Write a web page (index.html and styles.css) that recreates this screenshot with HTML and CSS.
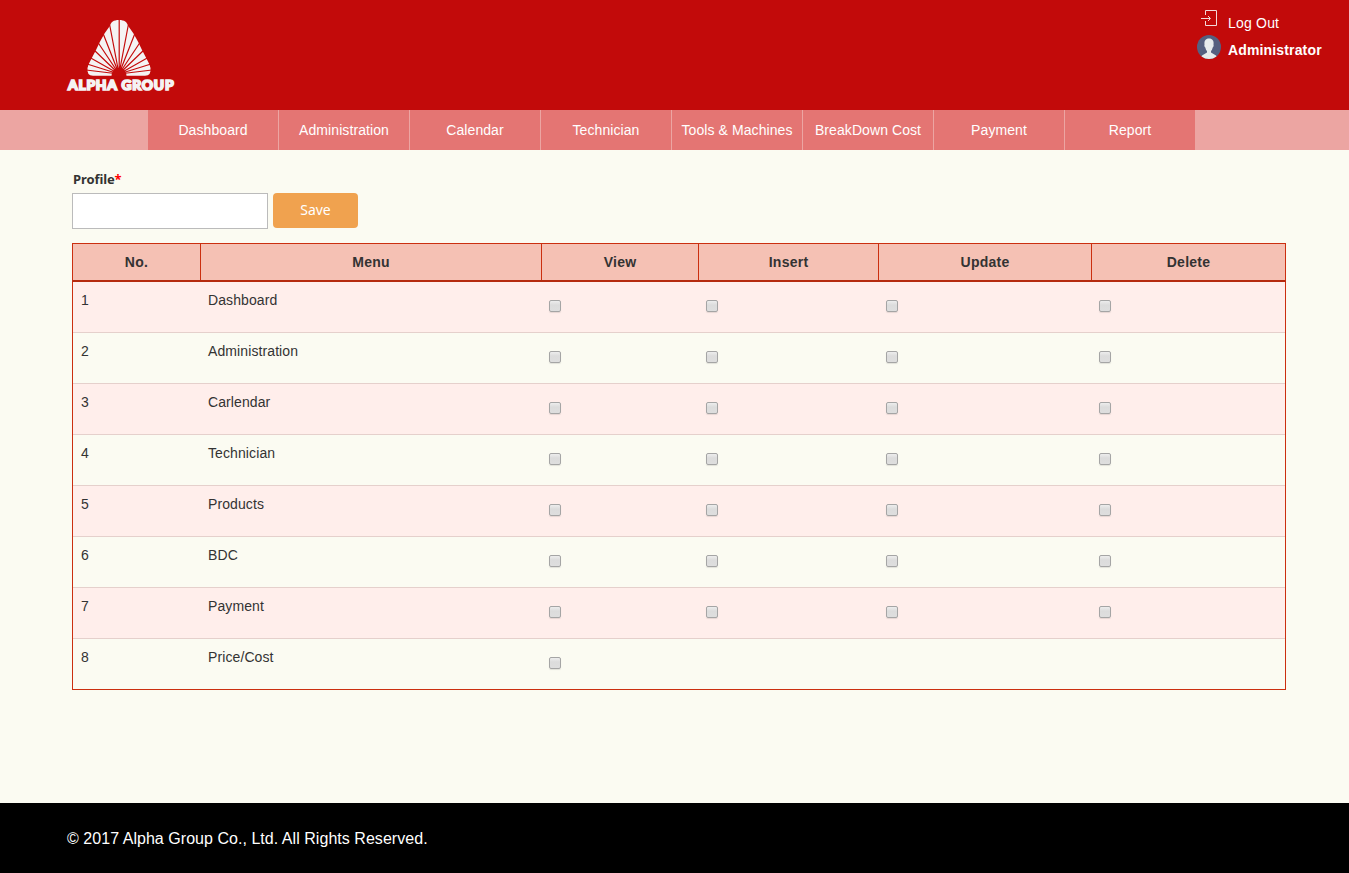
FILE: index.html
```
<!DOCTYPE html>
<html lang="en">
<head>
<meta charset="utf-8">
<title>Alpha Group</title>
<link rel="stylesheet" href="styles.css">
</head>
<body>
<header class="header">
  <svg class="logo" viewBox="0 0 120 90" width="120" height="90" role="img" aria-label="Alpha Group">
    <path fill="#f5f3f3" d="M59 10C53.500 10 51 12 49.800 16L44.500 23.500L39.800 32L36 40L31.800 48L28.500 54.500L27.500 58Q26.500 65.500 33 65.800H85Q91.500 65.500 90.500 58L89.500 54.500L86.200 48L82 40L78.200 32L73.500 23.500L68.200 16C67 12 64.500 10 59 10Z"/>
    <path stroke="#c40b0b" stroke-width="1.200" fill="none" d="M59.200 64V9M59 64L49.500 14M59 64L68.500 14M59 64L42.500 22M59 64L75.500 22M59 64L37 31M59 64L81 31M59 64L33 39M59 64L85 39M59 64L29 47M59 64L89 47M59 64L27 54M59 64L91 54M59 64L26 60M59 64L92 60"/>
    <path fill="#c40b0b" d="M51.500 66C52 55 66 55 66.500 66Z"/>
    <text class="wordmark" x="7.900" y="80.200" textLength="106.500" lengthAdjust="spacingAndGlyphs">ALPHA GROUP</text>
  </svg>
  <div class="account">
    <a class="account-row">
      <svg width="24" height="24" viewBox="0 0 24 24"><path d="M8.500 8V3.500H19.500V18.500H8.500V14M4 11.500H13M11 9L13.500 11.500L11 14" fill="none" stroke="#f3dada"/></svg>
      <span class="logout">Log Out</span>
    </a>
    <div class="account-row">
      <svg width="24" height="24" viewBox="0 0 24 24"><circle cx="12" cy="12" r="12" fill="#556080"/><path fill="#e7eced" d="M12 3.500C8.500 3.500 7 6 7.500 9.500C7 11 7.800 12 8.300 12.500Q8.800 15 10 16V17.500L5 20.500L4.500 21.400Q8 24 12 24T19.500 21.400L19 20.500L14 17.500V16Q15.200 15 15.700 12.500C16.200 12 17 11 16.500 9.500C17 6 15.500 3.500 12 3.500Z"/></svg>
      <strong class="user">Administrator</strong>
    </div>
  </div>
</header>
<nav class="nav">
  <a>Dashboard</a><a>Administration</a><a>Calendar</a><a>Technician</a><a>Tools &amp; Machines</a><a>BreakDown Cost</a><a>Payment</a><a>Report</a>
</nav>
<main class="main">
  <label class="label" for="profile">Profile<span class="required">*</span></label>
  <div class="form"><input class="input" id="profile" type="text"><button class="save">Save</button></div>
  <div class="table">
    <div class="row head"><span>No.</span><span>Menu</span><span>View</span><span>Insert</span><span>Update</span><span>Delete</span></div>
    <div class="row"><span>1</span><span>Dashboard</span><input type="checkbox"><input type="checkbox"><input type="checkbox"><input type="checkbox"></div>
    <div class="row"><span>2</span><span>Administration</span><input type="checkbox"><input type="checkbox"><input type="checkbox"><input type="checkbox"></div>
    <div class="row"><span>3</span><span>Carlendar</span><input type="checkbox"><input type="checkbox"><input type="checkbox"><input type="checkbox"></div>
    <div class="row"><span>4</span><span>Technician</span><input type="checkbox"><input type="checkbox"><input type="checkbox"><input type="checkbox"></div>
    <div class="row"><span>5</span><span>Products</span><input type="checkbox"><input type="checkbox"><input type="checkbox"><input type="checkbox"></div>
    <div class="row"><span>6</span><span>BDC</span><input type="checkbox"><input type="checkbox"><input type="checkbox"><input type="checkbox"></div>
    <div class="row"><span>7</span><span>Payment</span><input type="checkbox"><input type="checkbox"><input type="checkbox"><input type="checkbox"></div>
    <div class="row"><span>8</span><span>Price/Cost</span><input type="checkbox"></div>
  </div>
</main>
<footer class="footer">© 2017 Alpha Group Co., Ltd. All Rights Reserved.</footer>
</body>
</html>
```
FILE: styles.css
```
* { box-sizing: border-box; }
body {
  margin: 0;
  min-height: 873px;
  display: flex;
  flex-direction: column;
  background: #fbfbf2;
  color: #333;
  font: 14px/20px "Liberation Sans", Arial, sans-serif;
}
.header {
  height: 110px;
  padding: 10px 27px 0 60px;
  display: flex;
  justify-content: space-between;
  background: #c20a0a;
  color: #fff;
}
.logo { display: block; }
.wordmark { font: 900 13.500px Lato, sans-serif; letter-spacing: .8px; fill: #f5f3f3; stroke: #f5f3f3; stroke-width: 1.7; }
.account { width: 125px; margin-top: -3px; }
.account-row { display: flex; gap: 7px; height: 28px; }
.account-row svg { flex: none; }
.logout { padding-top: 6px; letter-spacing: .2px; }
.user { padding-top: 5px; letter-spacing: .15px; }
.nav {
  height: 40px;
  padding-left: 148px;
  display: flex;
  background: #eca5a2;
  color: #fff;
  line-height: 40px;
  text-align: center;
}
.nav a { width: 131px; border-right: 1px solid #eca5a2; background: #e47573; letter-spacing: .08px; white-space: nowrap; }
.nav a:last-child { border-right: 0; width: 130px; }
.main { flex: 1; padding: 19px 63px 0 72px; }
.label { display: block; height: 24px; padding-left: 1px; font: bold 13px/20px "Noto Sans", sans-serif; letter-spacing: -.1px; }
.required { color: #f00; }
.form { display: flex; gap: 5px; height: 50px; }
.input { width: 196px; height: 36px; border: 1px solid #bbb; background: #fff; }
.save { width: 85px; height: 35px; padding: 0 0 2px; border: 0; border-radius: 4px; background: #f0a24f; color: #fff; font: 14px "Noto Sans", sans-serif; }
.table { border: solid #cb2f10; border-width: 1px 0 0; }
.row {
  display: grid;
  grid-template-columns: 128px 341px 157px 180px 213px 1fr;
  height: 51px;
  border: solid #cb2f10;
  border-width: 0 1px;
  letter-spacing: .1px;
  box-shadow: inset 0 -1px #e5d0cc;
}
.row:nth-child(even) { background: #ffeeeb; }
.row span { padding: 8px 7px; }
.row > span:first-child { padding-left: 8px; }
.row:last-child { border-bottom: 1px solid #cb2f10; box-shadow: none; }
.row.head { height: 38px; background: #f5c1b4; border-bottom: 2px solid #b52a0e; box-shadow: none; font-weight: bold; letter-spacing: .25px; text-align: center; }
.row.head span { padding: 8px 0; border-right: 1px solid #cb2f10; }
.row.head span:last-child { border-right: 0; }
.row input {
  appearance: none;
  width: 12px;
  height: 12px;
  margin: 18px 0 0 7px;
  border: 1px solid #a5a5a5;
  border-radius: 2px;
  background: linear-gradient(#ededed, #dcdcdc 40%, #dedede);
  box-shadow: 0 1px 1px rgba(0, 0, 0, .1);
}
.footer { height: 70px; padding-left: 67px; background: #000; color: #fff; font-size: 16px; line-height: 71px; letter-spacing: .04px; }
```
